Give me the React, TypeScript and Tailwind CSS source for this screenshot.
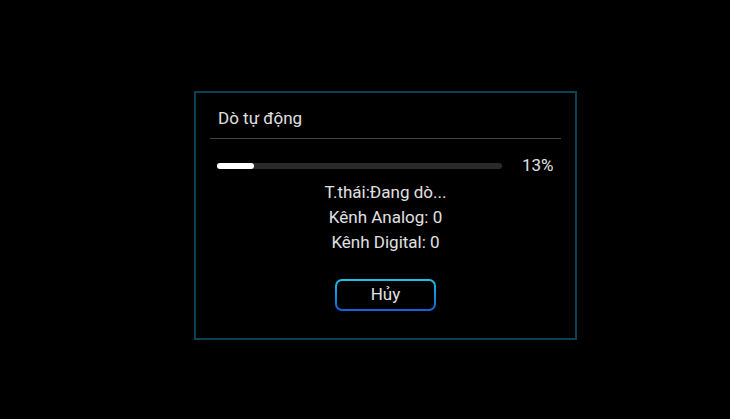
import React from "react";

export default function App() {
  const pct = 13;
  return (
    <div
      className="w-[730px] h-[419px] bg-black pt-[91px] pl-[194px]"
      style={{ fontFamily: "Roboto, 'Noto Sans', sans-serif" }}
    >
      <div className="w-[383px] h-[249px] border-2 border-[#0b4059] flex flex-col">
        <div className="pt-[14px] pl-[22px] text-[17px] leading-[23px] text-[#e0e0e0]">
          Dò tự động
        </div>
        <div className="mt-[8px] mx-[14px] h-px bg-[#444444]" />
        <div className="mt-[15px] h-[24px] pl-[21px] flex items-center">
          <div className="w-[285px] h-[6px] rounded-full bg-[#2a2a2a]">
            <div
              className="h-full rounded-full bg-white"
              style={{ width: `${pct}%` }}
            />
          </div>
          <div className="ml-[20px] text-[17px] text-[#e0e0e0]">{pct}%</div>
        </div>
        <div className="mt-[2px] flex flex-col items-center text-[17px] leading-[25px] text-[#e0e0e0]">
          <div>T.thái:Đang dò...</div>
          <div>Kênh Analog: 0</div>
          <div>Kênh Digital: 0</div>
        </div>
        <div className="mt-[24px] flex justify-center">
          <div className="w-[101px] h-[32px] rounded-[7px] p-[2px] bg-gradient-to-b from-[#22c2e6] to-[#1a5cd6]">
            <div className="w-full h-full rounded-[5px] bg-black flex items-center justify-center text-[17px] text-[#e0e0e0]">
              Hủy
            </div>
          </div>
        </div>
      </div>
    </div>
  );
}
